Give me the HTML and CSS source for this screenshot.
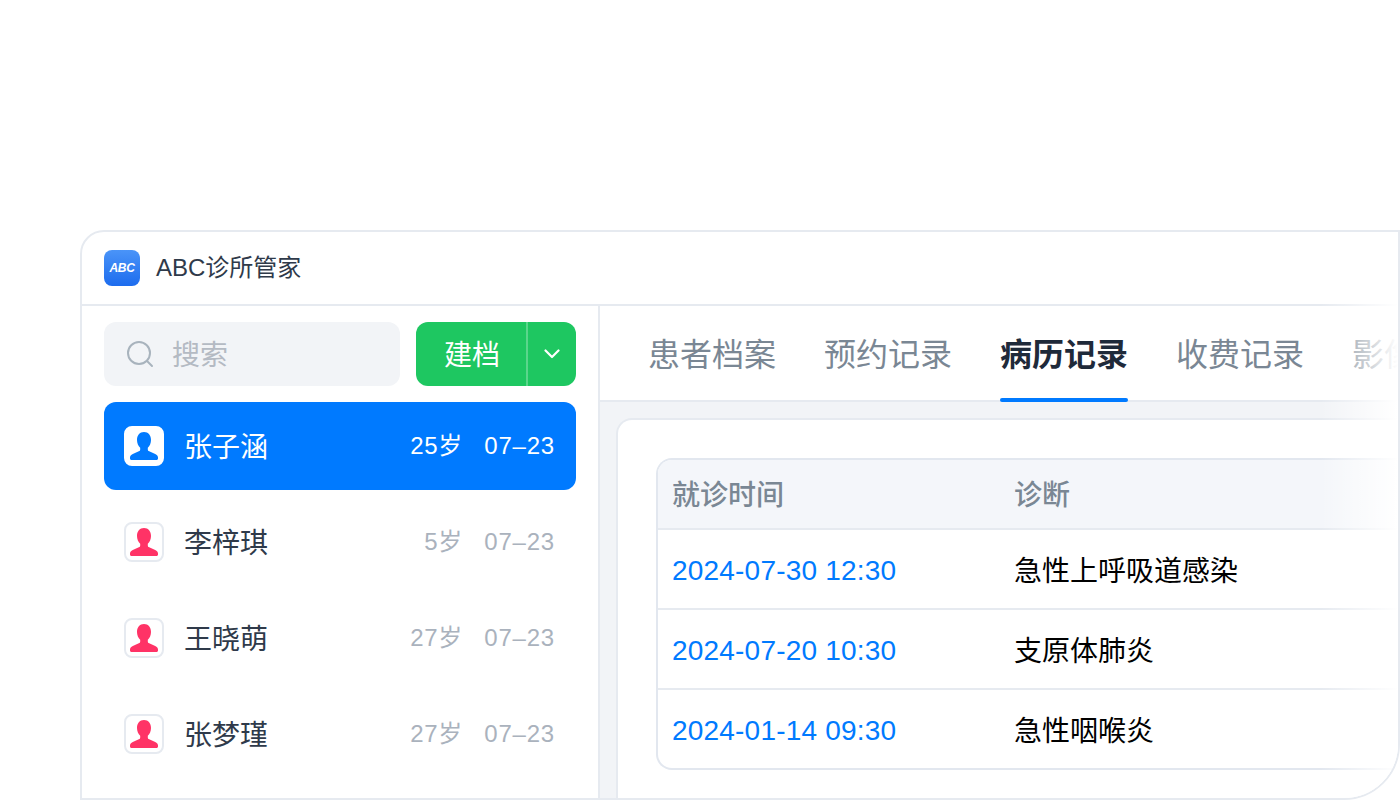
FILE: index.html
```html
<!DOCTYPE html>
<html lang="zh">
<head>
<meta charset="utf-8">
<title>ABC诊所管家</title>
<link rel="stylesheet" href="styles.css">
</head>
<body>
<div class="window">
  <header class="titlebar">
    <span class="logo"><span class="logo-text">ABC</span></span>
    <span class="app-name">ABC诊所管家</span>
  </header>
  <div class="body">
    <aside class="sidebar">
      <div class="toolbar">
        <div class="search">
          <svg class="search-icon" width="28" height="28" viewBox="0 0 28 28" fill="none" stroke="#a8b3bd" stroke-width="2" stroke-linecap="round"><circle cx="13" cy="13" r="11"/><path d="M21 21l5 5"/></svg>
          <span class="search-text">搜索</span>
        </div>
        <div class="create">
          <span class="create-label">建档</span>
          <span class="create-arrow">
            <svg width="16" height="10" viewBox="0 0 16 10" fill="none" stroke="#fff" stroke-width="2.2" stroke-linecap="round" stroke-linejoin="round"><path d="M1.5 1.5L8 8l6.5-6.5"/></svg>
          </span>
        </div>
      </div>
      <ul class="patients">
        <li class="patient active">
          <span class="avatar"><svg width="32" height="32" viewBox="0 0 32 32"><path class="person" d="M16 2C11.600 2 9 5.400 9 10c0 3.200 1.300 6 3.200 7.800v1.600c0 .9-.5 1.500-1.400 1.900l-6 2.600C3 24.800 2 26 2 27.600v.9c0 .8.700 1.500 1.500 1.500h25c.8 0 1.500-.7 1.500-1.500v-.9c0-1.600-1-2.800-2.800-3.700l-6-2.600c-.9-.4-1.400-1-1.400-1.900v-1.600C21.700 16 23 13.200 23 10 23 5.400 20.400 2 16 2z"/></svg></span>
          <span class="name">张子涵</span>
          <span class="age">25岁</span>
          <span class="date">07–23</span>
        </li>
        <li class="patient">
          <span class="avatar"><svg width="32" height="32" viewBox="0 0 32 32"><path class="person" d="M16 2C11.600 2 9 5.400 9 10c0 3.200 1.300 6 3.200 7.800v1.600c0 .9-.5 1.500-1.400 1.900l-6 2.600C3 24.800 2 26 2 27.600v.9c0 .8.700 1.500 1.500 1.500h25c.8 0 1.500-.7 1.500-1.500v-.9c0-1.600-1-2.800-2.800-3.700l-6-2.600c-.9-.4-1.400-1-1.400-1.900v-1.600C21.700 16 23 13.200 23 10 23 5.400 20.400 2 16 2z"/></svg></span>
          <span class="name">李梓琪</span>
          <span class="age">5岁</span>
          <span class="date">07–23</span>
        </li>
        <li class="patient">
          <span class="avatar"><svg width="32" height="32" viewBox="0 0 32 32"><path class="person" d="M16 2C11.600 2 9 5.400 9 10c0 3.200 1.300 6 3.200 7.800v1.600c0 .9-.5 1.500-1.400 1.900l-6 2.600C3 24.800 2 26 2 27.600v.9c0 .8.700 1.500 1.500 1.500h25c.8 0 1.500-.7 1.500-1.500v-.9c0-1.600-1-2.800-2.800-3.700l-6-2.600c-.9-.4-1.400-1-1.400-1.900v-1.600C21.700 16 23 13.200 23 10 23 5.400 20.400 2 16 2z"/></svg></span>
          <span class="name">王晓萌</span>
          <span class="age">27岁</span>
          <span class="date">07–23</span>
        </li>
        <li class="patient">
          <span class="avatar"><svg width="32" height="32" viewBox="0 0 32 32"><path class="person" d="M16 2C11.600 2 9 5.400 9 10c0 3.200 1.300 6 3.200 7.800v1.600c0 .9-.5 1.500-1.400 1.900l-6 2.600C3 24.800 2 26 2 27.600v.9c0 .8.700 1.500 1.500 1.500h25c.8 0 1.500-.7 1.500-1.500v-.9c0-1.600-1-2.800-2.800-3.700l-6-2.600c-.9-.4-1.400-1-1.400-1.900v-1.600C21.700 16 23 13.200 23 10 23 5.400 20.400 2 16 2z"/></svg></span>
          <span class="name">张梦瑾</span>
          <span class="age">27岁</span>
          <span class="date">07–23</span>
        </li>
      </ul>
    </aside>
    <main class="content">
      <nav class="tabs">
        <span class="tab">患者档案</span>
        <span class="tab">预约记录</span>
        <span class="tab current">病历记录</span>
        <span class="tab">收费记录</span>
        <span class="tab">影像资料</span>
      </nav>
      <div class="panel-area">
        <section class="card">
          <div class="records">
            <div class="row head"><span class="col-time">就诊时间</span><span>诊断</span></div>
            <div class="row"><span class="col-time link">2024-07-30 12:30</span><span>急性上呼吸道感染</span></div>
            <div class="row"><span class="col-time link">2024-07-20 10:30</span><span>支原体肺炎</span></div>
            <div class="row"><span class="col-time link">2024-01-14 09:30</span><span>急性咽喉炎</span></div>
          </div>
        </section>
      </div>
    </main>
  </div>
  <div class="fade"></div>
</div>
</body>
</html>
```
FILE: styles.css
```css
* { box-sizing: border-box; }
html, body { margin: 0; height: 800px; overflow: hidden; background: #fff; }
body {
  padding: 230px 0 0 80px;
  font-family: "Liberation Sans", "Noto Sans CJK SC", sans-serif;
}
.window {
  position: relative;
  width: 1320px;
  height: 570px;
  border: 2px solid #e6eaf0;
  border-radius: 24px 0 56px 0;
  background: #fff;
  overflow: hidden;
  display: flex;
  flex-direction: column;
}
.titlebar {
  flex: none;
  height: 74px;
  padding-left: 22px;
  display: flex;
  align-items: center;
  gap: 16px;
  border-bottom: 2px solid #e6eaf0;
}
.logo {
  width: 36px;
  height: 36px;
  border-radius: 8px;
  background: linear-gradient(180deg, #4a94f8, #1d6cee);
  color: #fff;
  display: flex;
  align-items: center;
  justify-content: center;
}
.logo-text { font-size: 12px; font-weight: 700; font-style: italic; letter-spacing: -.4px; }
.app-name { font-size: 24px; color: #2f3a4a; padding-bottom: 6px; }
.body { flex: 1; display: flex; min-height: 0; }
.sidebar {
  flex: none;
  width: 518px;
  padding: 16px 22px 0;
  border-right: 2px solid #e6eaf0;
}
.toolbar { display: flex; gap: 16px; margin-bottom: 16px; }
.search {
  width: 296px;
  height: 64px;
  border-radius: 12px;
  background: #f2f4f7;
  display: flex;
  align-items: center;
  gap: 18px;
  padding-left: 22px;
  font-size: 28px;
  color: #b4bac3;
}
.search-icon { flex: none; }
.search-text { padding-bottom: 2px; }
.create {
  width: 160px;
  height: 64px;
  border-radius: 12px;
  background: #1ec761;
  color: #fff;
  display: flex;
  font-size: 28px;
}
.create-label {
  width: 112px;
  display: flex;
  align-items: center;
  justify-content: center;
  padding: 0 0 2px 2px;
  border-right: 2px solid #5ad68b;
}
.create-arrow { flex: 1; display: flex; align-items: center; justify-content: center; }
.patients { list-style: none; margin: 0; padding: 0; display: flex; flex-direction: column; gap: 8px; }
.patient {
  height: 88px;
  padding: 0 21px 0 20px;
  border-radius: 12px;
  display: flex;
  align-items: center;
  color: #2f3a4a;
}
.patient.active { background: #007aff; color: #fff; }
.avatar {
  flex: none;
  width: 40px;
  height: 40px;
  border-radius: 8px;
  border: 2px solid #e6eaf0;
  background: #fff;
  display: flex;
  align-items: center;
  justify-content: center;
}
.active .avatar { border-color: #fff; }
.person { fill: #ff3366; }
.active .person { fill: #007aff; }
.name { font-size: 28px; margin-left: 20px; flex: 1; padding-bottom: 2px; }
.age, .date { font-size: 24px; color: #aab2bd; }
.age { letter-spacing: .6px; padding-bottom: 6px; }
.date { margin-left: 21.4px; letter-spacing: .8px; }
.active .age, .active .date { color: #fff; }
.content { flex: 1; min-width: 0; display: flex; flex-direction: column; }
.tabs {
  flex: none;
  height: 96px;
  padding-left: 48px;
  display: flex;
  gap: 48px;
  border-bottom: 2px solid #e6eaf0;
}
.tab {
  flex: none;
  position: relative;
  height: 94px;
  line-height: 98px;
  font-size: 32px;
  color: #7a8794;
}
.tab.current { color: #1f2a3a; font-weight: 700; }
.tab.current::after {
  content: "";
  position: absolute;
  left: 0;
  right: 0;
  bottom: -2px;
  height: 4px;
  border-radius: 2px;
  background: #007aff;
}
.panel-area { flex: 1; min-height: 0; background: #f2f4f7; padding: 16px 0 0 16px; }
.card {
  height: 100%;
  border: 2px solid #e6eaf0;
  border-right: 0;
  border-bottom: 0;
  border-top-left-radius: 16px;
  background: #fff;
  padding: 38px 0 0 38px;
}
.records {
  border: 2px solid #e2e7ef;
  border-right: 0;
  border-radius: 16px 0 0 16px;
}
.row {
  height: 80px;
  padding-left: 14px;
  display: flex;
  align-items: center;
  font-size: 28px;
  color: #000;
  border-bottom: 2px solid #e6eaf0;
}
.row:last-child { border-bottom: 0; height: 78px; }
.row.head { height: 70px; background: #f4f6fa; color: #7a8794; font-weight: 500; border-top-left-radius: 14px; padding-bottom: 2px; }
.col-time { width: 342px; flex: none; }
.link { color: #007aff; letter-spacing: .2px; padding-top: 4px; }
.fade {
  position: absolute;
  left: 1238px;
  right: 0;
  top: 72px;
  bottom: 0;
  background: linear-gradient(90deg, rgba(255,255,255,0), #fff);
  pointer-events: none;
}
```
